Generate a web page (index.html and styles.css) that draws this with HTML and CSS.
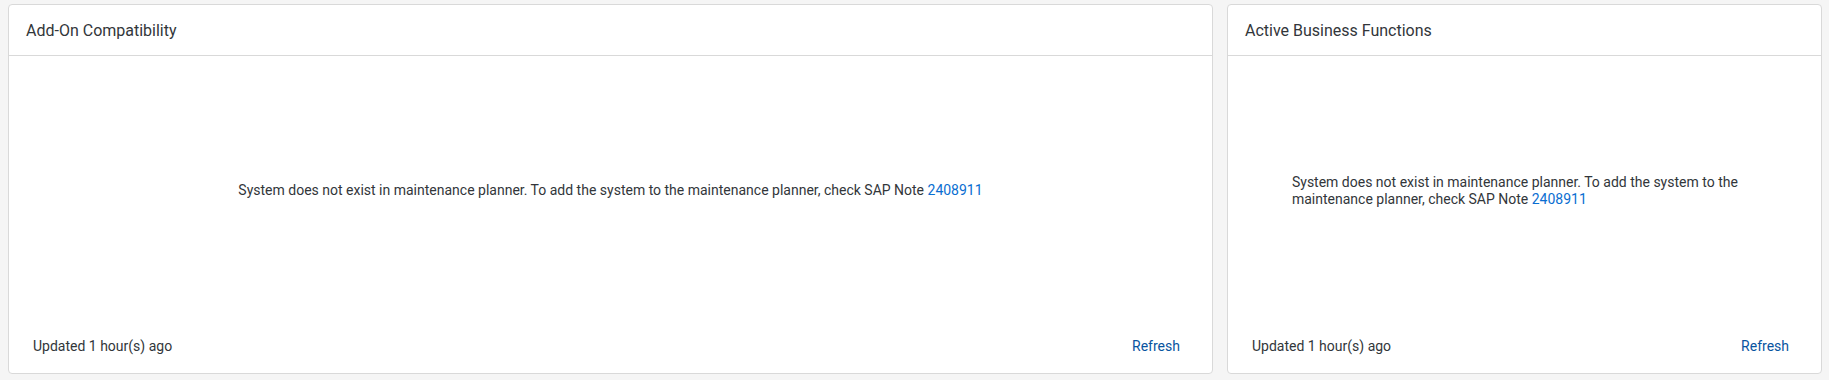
FILE: index.html
```html
<!DOCTYPE html>
<html lang="en">
<head>
    <meta charset="UTF-8">
    <meta name="viewport" content="width=device-width, initial-scale=1.0">
    <title>System Checks</title>
    <link rel="stylesheet" href="styles.css">
</head>
<body>
    <div class="cards">
        <!-- Add-on card -->
        <section class="card">
            <div class="card-header">Add-On Compatibility</div>
            <div class="card-body">
                <p>System does not exist in maintenance planner. To add the system to the maintenance planner, check SAP Note <a href="#" class="note-link">2408911</a></p>
            </div>
            <div class="card-footer">
                <span class="updated">Updated 1 hour(s) ago</span>
                <button class="btn-link">Refresh</button>
            </div>
        </section>

        <!-- Business functions card -->
        <section class="card">
            <div class="card-header">Active Business Functions</div>
            <div class="card-body">
                <p>System does not exist in maintenance planner. To add the system to the maintenance planner, check SAP Note <a href="#" class="note-link">2408911</a></p>
            </div>
            <div class="card-footer">
                <span class="updated">Updated 1 hour(s) ago</span>
                <button class="btn-link">Refresh</button>
            </div>
        </section>
    </div>
</body>
</html>
```

FILE: styles.css
```css
/* Reset */
body, p, button {
    margin: 0;
    padding: 0;
}

body {
    background-color: #f5f5f5;
    color: #32363a;
    font-family: Roboto, "Liberation Sans", sans-serif;
    font-size: 14px;
}

.cards {
    display: grid;
    grid-template-columns: 2.025fr 1fr;
    gap: 14px;
    padding: 4px 7px 0 8px;
}

/* Card */
.card {
    box-sizing: border-box;
    height: 370px;
    background-color: #fff;
    border: 1px solid #d9d9d9;
    border-radius: 4px;
    display: flex;
    flex-direction: column;
}

.card-header {
    height: 50px;
    border-bottom: 1px solid #d9d9d9;
    display: flex;
    align-items: center;
    padding: 0 17px;
    font-size: 16px;
}

.card-body {
    flex: 1;
    display: flex;
    align-items: center;
    justify-content: center;
    padding: 0 64px;
}

.card-body p {
    line-height: 17px;
}

.note-link {
    color: #0a6ed1;
    text-decoration: none;
}

.card-footer {
    height: 42px;
    padding: 0 24px 6px 24px;
    display: flex;
    align-items: center;
    justify-content: space-between;
}

.btn-link {
    background: none;
    border: none;
    color: #0854a0;
    font-family: inherit;
    font-size: 14px;
    padding: 0 8px;
    cursor: pointer;
}
```
